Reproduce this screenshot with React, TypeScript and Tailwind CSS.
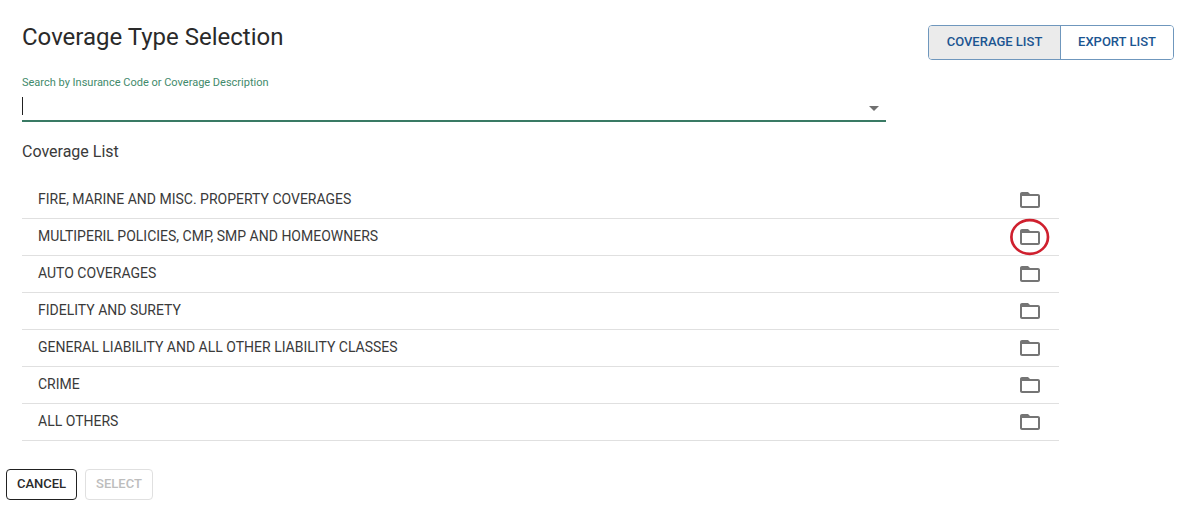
import { MdArrowDropDown, MdFolderOpen } from "react-icons/md";

const coverages = [
  "FIRE, MARINE AND MISC. PROPERTY COVERAGES",
  "MULTIPERIL POLICIES, CMP, SMP AND HOMEOWNERS",
  "AUTO COVERAGES",
  "FIDELITY AND SURETY",
  "GENERAL LIABILITY AND ALL OTHER LIABILITY CLASSES",
  "CRIME",
  "ALL OTHERS",
];

const highlighted = 1;

function Header() {
  return (
    <header className="flex items-start justify-between">
      <h1 className="text-2xl leading-6 text-[#2a2a2a]">Coverage Type Selection</h1>
      <div className="flex h-[35px] overflow-hidden rounded border border-[#6f97bd] text-[13px] font-medium text-[#1b5591]">
        <button type="button" aria-pressed="true" className="w-[131px] bg-[#ebebeb] pb-0.5">
          COVERAGE LIST
        </button>
        <button type="button" aria-pressed="false" className="w-[113px] border-l border-[#6f97bd] bg-white pb-0.5">
          EXPORT LIST
        </button>
      </div>
    </header>
  );
}

function SearchField() {
  return (
    <div className="mt-4 w-3/4">
      <label htmlFor="search" className="block text-[11px] leading-[14px] text-[#3f8a6b]">
        Search by Insurance Code or Coverage Description
      </label>
      <div className="mt-1.5 flex h-[26px] items-start border-b-2 border-[#397a64]">
        <span className="mt-px h-[18px] w-px bg-[#212121]" />
        <input id="search" type="text" autoComplete="off" className="h-5 min-w-0 flex-1 text-base outline-none" />
        <button type="button" aria-label="Open" className="text-[#707070]">
          <MdArrowDropDown className="size-6" />
        </button>
      </div>
    </div>
  );
}

function CoverageList() {
  return (
    <section className="mt-5">
      <h2 className="text-base leading-5 text-[#3a3a3a]">Coverage List</h2>
      <ul className="mt-5 w-[90%]">
        {coverages.map((name, index) => (
          <li
            key={name}
            className="flex h-[37px] items-center justify-between border-b border-[#e0e0e0] pr-[17px] pl-4 text-sm text-[#3a3a3a]"
          >
            <span className="pb-0.5">{name}</span>
            <button type="button" aria-label={"Open " + name} className="relative text-[#757575]">
              <MdFolderOpen className="size-6" />
              {index === highlighted && (
                <svg viewBox="0 0 40 38" className="absolute -top-[7px] -left-2 h-[38px] w-10 max-w-none" aria-hidden="true">
                  <ellipse cx="19.7" cy="19" rx="18.3" ry="16.8" fill="none" stroke="#cf202e" strokeWidth="2.7" />
                </svg>
              )}
            </button>
          </li>
        ))}
      </ul>
    </section>
  );
}

export default function App() {
  return (
    <main className="bg-white pt-[25px] pb-[7px] font-[Roboto,sans-serif]">
      <div className="px-[22px]">
        <Header />
        <SearchField />
        <CoverageList />
      </div>
      <footer className="mt-7 flex gap-2 px-[6px] text-[13px] font-medium">
        <button type="button" className="h-[31px] w-[71px] rounded border border-[#212121] pb-0.5 text-[#2a2a2a]">
          CANCEL
        </button>
        <button type="button" disabled className="h-[31px] w-[68px] rounded border border-[#e0e0e0] pb-0.5 text-[#bdbdbd]">
          SELECT
        </button>
      </footer>
    </main>
  );
}
